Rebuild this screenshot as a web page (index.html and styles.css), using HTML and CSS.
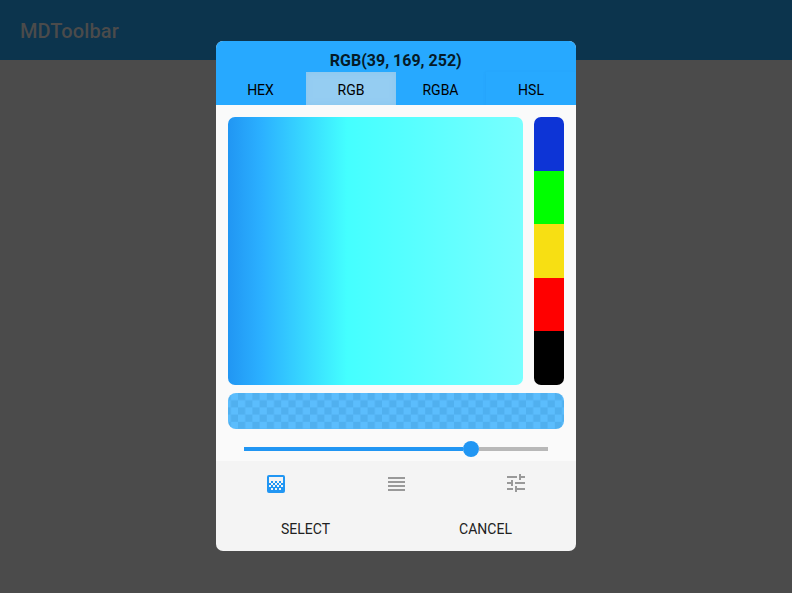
FILE: index.html
```html
<!DOCTYPE html>
<html lang="en">
<head>
<meta charset="utf-8">
<title>MDToolbar</title>
<link rel="stylesheet" href="styles.css">
</head>
<body>
<header class="toolbar">MDToolbar</header>
<main class="stage">
  <section class="dialog">
    <div class="head">
      <h1 class="value">RGB(39, 169, 252)</h1>
      <div class="tabs">
        <button class="tab nudge">HEX</button>
        <button class="tab active">RGB</button>
        <button class="tab nudge">RGBA</button>
        <button class="tab last">HSL</button>
      </div>
    </div>
    <div class="picker">
      <div class="colors">
        <div class="gradient"></div>
        <div class="swatches">
          <span class="blue"></span><span class="green"></span><span class="yellow"></span><span class="red"></span><span class="black"></span>
        </div>
      </div>
      <svg class="preview" width="336" height="36" viewBox="0 0 336 36">
        <defs>
          <pattern id="checker" x="-4.4" width="14.4" height="14.4" patternUnits="userSpaceOnUse">
            <rect width="14.4" height="14.4" fill="#5bbdfd"/>
            <path d="M0 0H7.2V7.2H0ZM7.2 7.2H14.4V14.4H7.2Z" fill="#50b0ef"/>
          </pattern>
        </defs>
        <rect width="336" height="36" fill="url(#checker)"/>
      </svg>
      <div class="slider"><div class="fill"></div><div class="thumb"></div><div class="rest"></div></div>
    </div>
    <div class="modes">
      <svg class="mode selected" width="24" height="24" viewBox="0 0 24 24"><path fill="currentColor" d="M11 9h2v2h-2V9m-2 2h2v2H9v-2m4 0h2v2h-2v-2m2-2h2v2h-2V9M7 9h2v2H7V9m12-6H5a2 2 0 0 0-2 2v14a2 2 0 0 0 2 2h14a2 2 0 0 0 2-2V5a2 2 0 0 0-2-2M9 18H7v-2h2v2m4 0h-2v-2h2v2m4 0h-2v-2h2v2m2-7h-2v2h2v2h-2v-2h-2v2h-2v-2h-2v2H9v-2H7v2H5v-2h2v-2H5V5h14v6z"/></svg>
      <svg class="mode" width="24" height="24" viewBox="0 0 24 24"><path fill="currentColor" d="M4 5h17v2H4zM4 9h17v2H4zM4 13h17v2H4zM4 17h17v2H4z"/></svg>
      <svg class="mode" width="24" height="24" viewBox="0 1 24 24"><path fill="currentColor" d="M3 17v2h6v-2H3M3 5v2h10V5H3m10 16v-2h8v-2h-8v-2h-2v6h2M7 9v2H3v2h4v2h2V9H7m14 4v-2H11v2h10m-6-4h2V7h4V5h-4V3h-2v6z"/></svg>
    </div>
    <div class="actions"><button class="nudge">SELECT</button><button class="nudge">CANCEL</button></div>
  </section>
</main>
</body>
</html>
```
FILE: styles.css
```css
* { box-sizing: border-box; }
body {
  margin: 0;
  height: 593px;
  overflow: hidden;
  background: linear-gradient(#0c344d 60px, #4b4b4b 60px);
  font-family: Roboto, sans-serif;
}
.toolbar {
  height: 41px;
  padding: 19px 20px 0;
  color: #4b4b4b;
  font-size: 20px;
  font-weight: 500;
  line-height: 24px;
  letter-spacing: 0.12px;
}
.stage { display: flex; justify-content: center; }
.dialog {
  width: 360px;
  height: 510px;
  display: flex;
  flex-direction: column;
  overflow: hidden;
  border-radius: 7px;
  background: #f4f4f4;
}
.head { height: 64px; background: #27a9ff; }
.value {
  height: 31px;
  margin: 0;
  padding: 8px 0.5px 0 0;
  font-size: 16px;
  font-weight: 700;
  line-height: 23px;
  text-align: center;
  color: #051a27;
}
.tabs { display: grid; grid-template-columns: repeat(4, 1fr); height: 33px; }
button {
  border: 0;
  margin: 0;
  padding: 0;
  background: none;
  font: 14px/16px Roboto, sans-serif;
  color: #212121;
}
.tab { padding-top: 3px; color: #000; }
.nudge { padding-right: 1px; }
.tab.active {
  background: #95cdf2;
  box-shadow: inset 0 0 6px #8ac6ef;
}
.last { box-shadow: -1px 0 3px rgba(0, 80, 160, 0.05); }
.picker { height: 356px; padding: 12px 12px 0; background: #fafafa; }
.colors { display: flex; justify-content: space-between; height: 268px; margin-bottom: 8px; }
.gradient {
  width: 294.6px;
  border-radius: 7px;
  background: linear-gradient(90deg, #2196f3 0, #2bb0ff 33px, #44ffff 119px, #78ffff 100%);
}
.swatches { display: grid; grid-template-rows: repeat(5, 1fr); width: 29.6px; overflow: hidden; border-radius: 7px; }
.blue { background: #0d34d6; }
.green { background: #00ff00; }
.yellow { background: #f7df13; }
.red { background: #ff0000; }
.black { background: #000; }
.preview { display: block; border-radius: 8px; }
.slider { display: flex; align-items: center; height: 16px; margin: 12px 16px 0; }
.fill { width: 219px; height: 4px; background: #2196f3; }
.thumb { width: 16px; height: 16px; border-radius: 50%; background: #2196f3; }
.rest { flex: 1; height: 4px; background: #b8b8b8; }
.modes { display: grid; grid-template-columns: repeat(3, 1fr); justify-items: center; height: 46px; padding-top: 11px; color: #999; }
.selected { color: #2196f3; }
.actions { display: grid; grid-template-columns: 1fr 1fr; height: 44px; }
```
